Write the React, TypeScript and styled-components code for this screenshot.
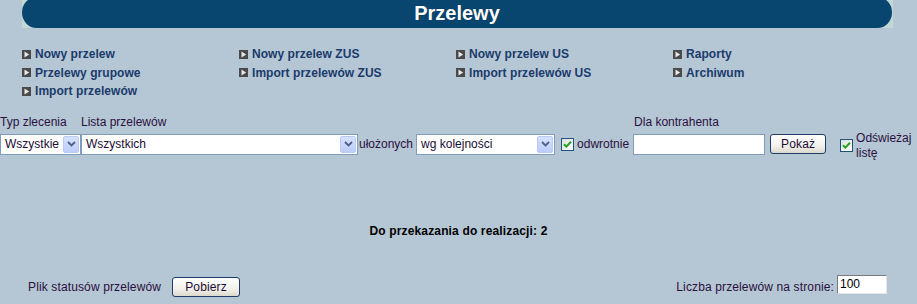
import React from "react";
import styled, { createGlobalStyle } from "styled-components";

const GlobalStyle = createGlobalStyle`
  html, body {
    margin: 0;
    padding: 0;
    background: #b5c6d4;
    font-family: "Liberation Sans", Arial, sans-serif;
    font-size: 12px;
    color: #2a1040;
  }
`;

const Page = styled.div`
  width: 917px;
  height: 304px;
  display: flex;
  flex-direction: column;
  overflow: hidden;
`;

const HeaderBox = styled.div`
  margin-left: 22px;
  width: 871px;
  height: 28px;
  background: #c2d8d5;
  overflow: hidden;
`;

const HeaderPill = styled.div`
  margin-top: -3px;
  height: 31px;
  width: 870px;
  border-radius: 15px / 16px;
  background: #08456f;
  display: flex;
  align-items: center;
  justify-content: center;
  padding-top: 2px;
  box-sizing: border-box;
  color: #ffffff;
  font-weight: bold;
  font-size: 20px;
  text-shadow: 0 0 1px rgba(0, 0, 0, 0.4);
`;

const LinkGrid = styled.div`
  margin: 17px 0 0 22px;
  display: grid;
  grid-template-columns: repeat(4, 217px);
  grid-auto-rows: 18.5px;
`;

const LinkItem = styled.a`
  display: flex;
  align-items: center;
  gap: 4px;
  color: #1a3b6b;
  font-weight: bold;
  font-size: 12px;
  text-decoration: none;
  cursor: pointer;
  white-space: nowrap;
  letter-spacing: 0.05px;
`;

const FilterRow = styled.div`
  margin-top: 14px;
  display: flex;
  align-items: flex-start;
  height: 46px;
`;

const Field = styled.div<{ $ml?: number }>`
  display: flex;
  flex-direction: column;
  margin-left: ${(p) => p.$ml ?? 0}px;
`;

const Label = styled.div<{ $indent?: number }>`
  height: 15px;
  line-height: 15px;
  margin-bottom: 4px;
  padding-left: ${(p) => p.$indent ?? 0}px;
  white-space: nowrap;
`;

const Inline = styled.div<{ $ml?: number }>`
  margin-top: 19px;
  margin-left: ${(p) => p.$ml ?? 0}px;
  height: 21px;
  display: flex;
  align-items: center;
  white-space: nowrap;
`;

const SelectBox = styled.div<{ $w: number }>`
  width: ${(p) => p.$w}px;
  height: 21px;
  box-sizing: border-box;
  border: 1px solid #7f9db9;
  background: #ffffff;
  display: flex;
  align-items: center;
  padding: 1px;
  color: #1a0c33;
  font-size: 12px;
`;

const SelectText = styled.div`
  flex: 1;
  padding-left: 3px;
  white-space: nowrap;
  overflow: hidden;
`;

const ArrowBtn = styled.div`
  width: 16px;
  height: 17px;
  box-sizing: border-box;
  border: 1px solid #b9cbf3;
  border-radius: 2px;
  background: linear-gradient(#d5e1fd, #bccdf9);
  display: flex;
  align-items: center;
  justify-content: center;
`;

const TextInput = styled.div<{ $w: number }>`
  width: ${(p) => p.$w}px;
  height: 21px;
  box-sizing: border-box;
  border: 1px solid #7f9db9;
  background: #ffffff;
`;

const Button = styled.button<{ $w: number; $ml?: number }>`
  width: ${(p) => p.$w}px;
  height: 20px;
  margin-left: ${(p) => p.$ml ?? 0}px;
  box-sizing: border-box;
  border: 1px solid #1f3b66;
  border-radius: 3px;
  background: linear-gradient(#ffffff, #f2f1ec 60%, #dcd8cc);
  font-family: "Liberation Sans", Arial, sans-serif;
  font-size: 12px;
  letter-spacing: 0.15px;
  color: #1a0c33;
  padding: 0;
  display: flex;
  align-items: center;
  justify-content: center;
`;

const CheckWrap = styled.div<{ $ml?: number }>`
  margin-left: ${(p) => p.$ml ?? 0}px;
  width: 13px;
  height: 13px;
  display: flex;
`;

const RefreshItem = styled.div`
  margin-left: 14px;
  margin-top: 16px;
  display: flex;
  align-items: center;
  gap: 3px;
`;

const RefreshText = styled.div`
  width: 60px;
  line-height: 15px;
`;

const Summary = styled.div`
  margin-top: 63px;
  text-align: center;
  font-weight: bold;
  color: #000000;
  line-height: 15px;
  letter-spacing: 0.15px;
`;

const BottomRow = styled.div`
  margin-top: 38px;
  display: flex;
  justify-content: space-between;
  align-items: center;
  height: 20px;
  letter-spacing: 0.13px;
`;

const BottomLeft = styled.div`
  display: flex;
  align-items: center;
  padding-left: 28px;
`;

const BottomRight = styled.div`
  display: flex;
  align-items: center;
  padding-right: 30px;
`;

const SmallInput = styled.div`
  margin-left: 3px;
  margin-top: -5px;
  width: 50px;
  height: 19px;
  box-sizing: border-box;
  border-top: 1px solid #7a7a7a;
  border-left: 1px solid #7a7a7a;
  border-right: 1px solid #e4e4e4;
  border-bottom: 1px solid #e4e4e4;
  background: #ffffff;
  color: #000;
  padding-left: 2px;
  line-height: 16px;
  letter-spacing: 0;
`;

const LinkIcon = () => (
  <svg width="9" height="9" viewBox="0 0 9 9">
    <rect x="0" y="0" width="9" height="9" fill="#4a4a4a" />
    <polygon points="2.5,1.5 7.2,4.5 2.5,7.5" fill="#e8e8e8" />
  </svg>
);

const Chevron = () => (
  <svg width="9" height="6" viewBox="0 0 9 6">
    <polyline points="1,1 4.5,4.5 8,1" fill="none" stroke="#4d6185" strokeWidth="1.8" />
  </svg>
);

const Check = () => (
  <svg width="13" height="13" viewBox="0 0 13 13">
    <defs>
      <linearGradient id="cbg" x1="0" y1="0" x2="1" y2="1">
        <stop offset="0" stopColor="#dcdcd7" />
        <stop offset="1" stopColor="#ffffff" />
      </linearGradient>
    </defs>
    <rect x="0.5" y="0.5" width="12" height="12" fill="url(#cbg)" stroke="#1c5180" />
    <polyline points="3,6.2 5.3,8.6 10,3.8" fill="none" stroke="#21a121" strokeWidth="2" />
  </svg>
);

const Select = ({ w, text }: { w: number; text: string }) => (
  <SelectBox $w={w}>
    <SelectText>{text}</SelectText>
    <ArrowBtn>
      <Chevron />
    </ArrowBtn>
  </SelectBox>
);

const links: string[] = [
  "Nowy przelew",
  "Nowy przelew ZUS",
  "Nowy przelew US",
  "Raporty",
  "Przelewy grupowe",
  "Import przelewów ZUS",
  "Import przelewów US",
  "Archiwum",
  "Import przelewów",
];

export default function App() {
  return (
    <Page>
      <GlobalStyle />
      <HeaderBox>
        <HeaderPill>Przelewy</HeaderPill>
      </HeaderBox>
      <LinkGrid>
        {links.map((l, i) => (
          <LinkItem key={i}>
            <LinkIcon />
            {l}
          </LinkItem>
        ))}
      </LinkGrid>
      <FilterRow>
        <Field>
          <Label>Typ zlecenia</Label>
          <Select w={81} text="Wszystkie" />
        </Field>
        <Field>
          <Label>Lista przelewów</Label>
          <Select w={277} text="Wszystkich" />
        </Field>
        <Inline $ml={1}>ułożonych</Inline>
        <Field $ml={3}>
          <Label />
          <Select w={139} text="wg kolejności" />
        </Field>
        <Inline $ml={6}>
          <CheckWrap>
            <Check />
          </CheckWrap>
          <span style={{ marginLeft: 3 }}>odwrotnie</span>
        </Inline>
        <Field $ml={4}>
          <Label $indent={1}>Dla kontrahenta</Label>
          <TextInput $w={132} />
        </Field>
        <Inline $ml={5}>
          <Button $w={56}>Pokaż</Button>
        </Inline>
        <RefreshItem>
          <CheckWrap>
            <Check />
          </CheckWrap>
          <RefreshText>Odświeżaj listę</RefreshText>
        </RefreshItem>
      </FilterRow>
      <Summary>Do przekazania do realizacji: 2</Summary>
      <BottomRow>
        <BottomLeft>
          Plik statusów przelewów
          <Button $w={68} $ml={11}>Pobierz</Button>
        </BottomLeft>
        <BottomRight>
          Liczba przelewów na stronie:
          <SmallInput>100</SmallInput>
        </BottomRight>
      </BottomRow>
    </Page>
  );
}
